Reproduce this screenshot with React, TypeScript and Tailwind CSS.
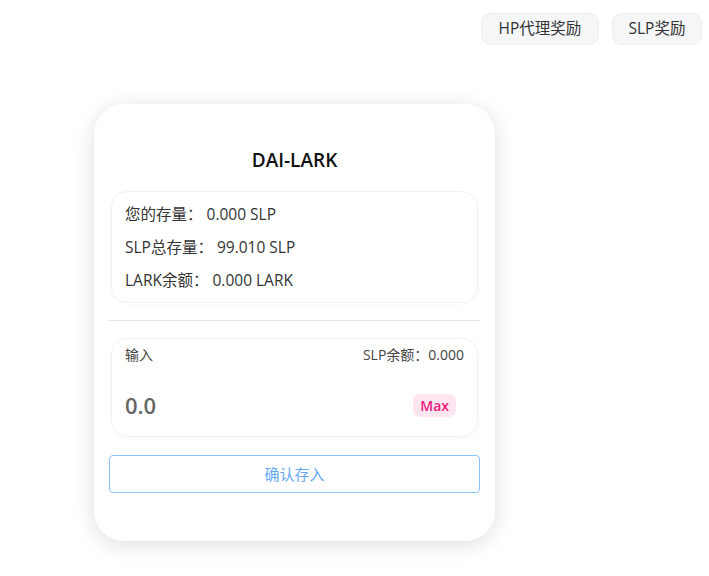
export default function App() {
  return (
    <div className="min-h-[576px] w-full bg-white font-['Open_Sans','Noto_Sans_CJK_SC',sans-serif] text-[#333]">
      <div className="flex justify-end gap-[13px] pr-[7px] pt-[13px]">
        <button className="h-[32px] w-[118px] rounded-[10px] border border-[#eceef2] bg-[#f5f6f8] text-[15.5px] text-[#333]">
          HP代理奖励
        </button>
        <button className="h-[32px] w-[90px] rounded-[10px] border border-[#eceef2] bg-[#f5f6f8] text-[15.5px] text-[#333]">
          SLP奖励
        </button>
      </div>

      <div className="ml-[94px] mt-[59px] w-[401px] rounded-[30px] bg-white px-[15px] pb-[48px] pt-[42px] shadow-[0_4px_22px_rgba(0,0,0,0.13)]">
        <h2 className="text-center text-[19px] leading-[28px] font-semibold text-[#111]">DAI-LARK</h2>

        <div className="mx-[2px] mt-[17px] rounded-[16px] border border-[#f2f2f2] px-[13px] pb-[5px] pt-[6px] text-[15.5px] leading-[33px] shadow-[0_1px_4px_rgba(0,0,0,0.03)]">
          <p>您的存量：&nbsp;0.000 SLP</p>
          <p>SLP总存量：&nbsp;99.010 SLP</p>
          <p>LARK余额：&nbsp;0.000 LARK</p>
        </div>

        <div className="mt-[17px] h-px bg-[#e6e6e6]" />

        <div className="mx-[2px] mt-[17px] rounded-[16px] border border-[#f2f2f2] px-[13px] pb-[13px] pt-[6px] shadow-[0_1px_4px_rgba(0,0,0,0.03)]">
          <div className="flex items-center justify-between text-[14px] leading-[20px] text-[#444]">
            <span>输入</span>
            <span>SLP余额：0.000</span>
          </div>
          <div className="mt-[22px] flex h-[36px] items-center justify-between">
            <span className="text-[22px] font-semibold text-[#666]">0.0</span>
            <span className="mr-[8px] rounded-[7px] bg-[#fde6f0] px-[7px] text-[14px] leading-[23px] font-semibold text-[#e8197c]">
              Max
            </span>
          </div>
        </div>

        <button className="mt-[18px] h-[38px] w-full rounded-[4px] border border-[#8cc2fb] text-[15px] text-[#64a8f5]">
          确认存入
        </button>
      </div>
    </div>
  );
}
